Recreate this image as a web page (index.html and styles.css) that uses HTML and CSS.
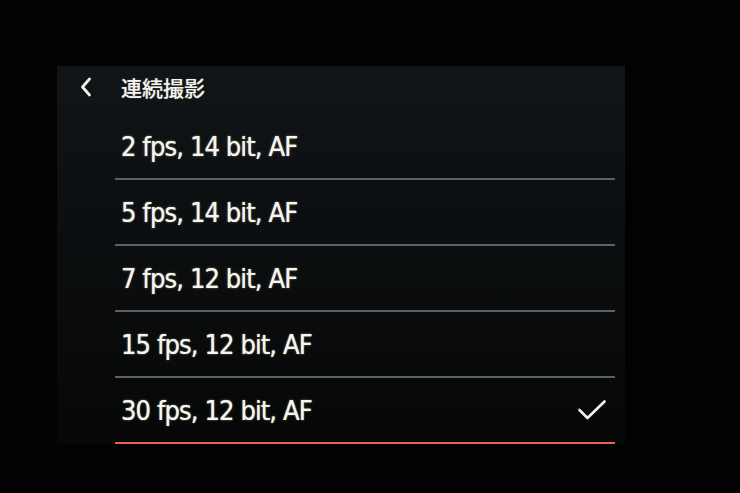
FILE: index.html
```html
<!DOCTYPE html>
<html lang="ja">
<head>
<meta charset="utf-8">
<title>連続撮影</title>
<link rel="stylesheet" href="styles.css">
</head>
<body>
<div class="frame">
  <div class="panel">
    <div class="header">
      <svg class="back" width="12" height="20" viewBox="0 0 12 20" aria-hidden="true">
        <path d="M9.5 2 L2.5 10 L9.5 18" fill="none" stroke="#f2f2ee" stroke-width="2.8" stroke-linecap="round" stroke-linejoin="round"/>
      </svg>
      <span class="title">連続撮影</span>
    </div>
    <ul class="list">
      <li class="row">2 fps, 14 bit, AF</li>
      <li class="row">5 fps, 14 bit, AF</li>
      <li class="row">7 fps, 12 bit, AF</li>
      <li class="row">15 fps, 12 bit, AF</li>
      <li class="row selected">30 fps, 12 bit, AF
        <svg class="check" width="28" height="20" viewBox="0 0 28 20" aria-hidden="true">
          <path d="M1.5 10 L9.5 18 L26.5 1.5" fill="none" stroke="#f2f2ea" stroke-width="2.6" stroke-linecap="round" stroke-linejoin="round"/>
        </svg>
      </li>
    </ul>
  </div>
</div>
</body>
</html>
```

FILE: styles.css
```css
html, body {
  margin: 0;
  padding: 0;
  background: #020202;
  width: 740px;
  height: 493px;
  overflow: hidden;
}

.frame {
  box-sizing: border-box;
  width: 740px;
  height: 493px;
  padding: 66px 0 0 57px;
}

.panel {
  width: 568px;
  height: 378px;
  background: linear-gradient(180deg, #111517 0%, #0c0f11 40%, #060707 100%);
  display: flex;
  flex-direction: column;
}

.header {
  height: 48px;
  display: flex;
  align-items: center;
  padding-left: 23px;
  box-sizing: border-box;
  padding-bottom: 7px;
}

.back {
  display: block;
  margin-right: 29px;
}

.title {
  font-family: "Noto Sans CJK JP", "Noto Sans", sans-serif;
  font-size: 21px;
  font-weight: 500;
  color: #f2f2ee;
  text-shadow: 0 0 1px rgba(255, 255, 235, 0.5);
}

.list {
  list-style: none;
  margin: 0 0 0 58px;
  padding: 0;
  width: 500px;
}

.row {
  height: 64px;
  display: flex;
  align-items: center;
  justify-content: space-between;
  padding: 0 9px 0 6px;
  border-bottom: 2px solid #5e6163;
  font-family: "DejaVu Sans Condensed", "DejaVu Sans", sans-serif;
  font-stretch: condensed;
  font-size: 27px;
  letter-spacing: -0.9px;
  color: #f6f6ef;
  text-shadow: 0 0 1px rgba(255, 255, 230, 0.7), 0 0 3px rgba(255, 255, 220, 0.25);
}

.row.selected {
  border-bottom-color: #e8604f;
}

.check {
  display: block;
}
```
